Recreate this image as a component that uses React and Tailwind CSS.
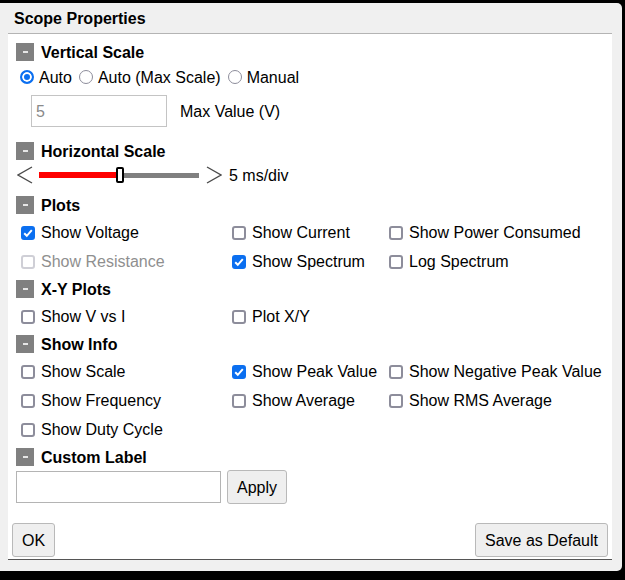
import React from 'react';

// ─── Collapsible section heading ───────────────────────────────────────────
const SectionHeading = ({ title }) => (
  <div className="flex items-center h-[26px] pl-[8px]">
    <span className="w-[18px] h-[18px] bg-[#808080] flex items-center justify-center">
      <span className="w-[5px] h-[2px] bg-[#e6e6e6]" />
    </span>
    <span className="ml-[7px] font-bold pt-[1px]">{title}</span>
  </div>
);

// ─── Checkbox cell ─────────────────────────────────────────────────────────
const Check = ({ label, checked, disabled }) => (
  <label className={`flex items-center ${disabled ? 'text-[#8f8f8f]' : 'text-black'}`}>
    <span className="relative ml-[4px] w-[14px] h-[14px] shrink-0">
      <input
        type="checkbox"
        defaultChecked={checked}
        disabled={disabled}
        className="appearance-none block m-0 w-[14px] h-[14px] border-2 border-[#8d8d9b] rounded-[3px] bg-white checked:bg-[#0b6ff0] checked:border-[#0b6ff0] disabled:border-[#cfcfd6]"
      />
      {checked && (
        <svg width="14" height="14" viewBox="0 0 14 14" className="absolute left-0 top-0 pointer-events-none">
          <polyline points="3.2,7.2 5.8,9.8 10.8,4.2" fill="none" stroke="white" strokeWidth="2" />
        </svg>
      )}
    </span>
    <span className="ml-[6px] whitespace-nowrap pt-[1px]">{label}</span>
  </label>
);

const CheckRow = ({ items }) => (
  <div className="grid grid-cols-[211px_157px_1fr] items-center h-[29px] pl-[9px]">
    {items.map((it, i) => (
      <div key={i}>{it && <Check {...it} />}</div>
    ))}
  </div>
);

const Radio = ({ label, checked, first }) => (
  <label className={`flex items-center ${first ? '' : 'ml-[7px]'}`}>
    <input
      type="radio"
      name="vscale"
      defaultChecked={checked}
      className="appearance-none block m-0 w-[14px] h-[14px] rounded-full border-[1.5px] border-[#8d8d9b] bg-white checked:border-2 checked:border-[#0b6ff0] checked:bg-[#0b6ff0] checked:shadow-[inset_0_0_0_2px_white]"
    />
    <span className="ml-[5px] whitespace-nowrap pt-[1px]">{label}</span>
  </label>
);

const Chevron = ({ dir }) => (
  <svg width="16" height="18" viewBox="0 0 16 18" className="shrink-0">
    <polyline
      points={dir === 'left' ? '15,1 1,9 15,17' : '1,1 15,9 1,17'}
      fill="none"
      stroke="#4a4a4a"
      strokeWidth="1.4"
    />
  </svg>
);

const btnClass =
  "h-[34px] px-[9px] bg-[#efefef] border border-[#b9b9b9] rounded-[3px] text-black text-[16px] pt-[1px]";

export default function App() {
  return (
    <div className="w-[625px] h-[580px] bg-black pt-[3px] overflow-hidden font-['Liberation_Sans',Arial,sans-serif] text-[16px] text-black">
      <div className="w-[622px] h-[568px] bg-[#f0f0f0] rounded-r-[5px] flex flex-col">
        {/* Title bar */}
        <div className="h-[30px] flex items-center pl-[14px] pt-[2px] font-bold">Scope Properties</div>

        {/* Body */}
        <div className="ml-[8px] w-[604px] h-[527px] bg-white border-t border-t-[#b4b4b4] border-b border-b-[#555555] flex flex-col pt-[5px]">
          <SectionHeading title="Vertical Scale" />
          <div className="flex items-center h-[24px] pl-[12px]">
            <Radio label="Auto" checked first />
            <Radio label="Auto (Max Scale)" />
            <Radio label="Manual" />
          </div>
          <div className="flex items-center mt-[6px] h-[32px] pl-[23px]">
            <input
              type="text"
              defaultValue="5"
              disabled
              className="w-[136px] h-[32px] border border-[#c4c4c4] px-[4px] pt-[1px] text-[#8a8a8a] bg-white outline-none"
            />
            <span className="ml-[13px] pt-[1px]">Max Value (V)</span>
          </div>

          <div className="mt-[11px]">
            <SectionHeading title="Horizontal Scale" />
          </div>
          <div className="flex items-center h-[22px] pl-[9px]">
            <Chevron dir="left" />
            <div className="relative ml-[6px] w-[160px] h-[16px] flex items-center">
              <div className="w-[77px] h-[6px] bg-[#ff0000]" />
              <div className="flex-1 h-[5px] bg-[#808080]" />
              <div className="absolute left-[77px] top-0 w-[8px] h-[16px] bg-white border-2 border-black rounded-[2px]" />
            </div>
            <div className="ml-[7px]">
              <Chevron dir="right" />
            </div>
            <span className="ml-[7px] pt-[1px]">5 ms/div</span>
          </div>

          <div className="mt-[6px]">
            <SectionHeading title="Plots" />
          </div>
          <CheckRow
            items={[
              { label: 'Show Voltage', checked: true },
              { label: 'Show Current' },
              { label: 'Show Power Consumed' },
            ]}
          />
          <CheckRow
            items={[
              { label: 'Show Resistance', disabled: true },
              { label: 'Show Spectrum', checked: true },
              { label: 'Log Spectrum' },
            ]}
          />

          <SectionHeading title="X-Y Plots" />
          <CheckRow items={[{ label: 'Show V vs I' }, { label: 'Plot X/Y' }, null]} />

          <SectionHeading title="Show Info" />
          <CheckRow
            items={[
              { label: 'Show Scale' },
              { label: 'Show Peak Value', checked: true },
              { label: 'Show Negative Peak Value' },
            ]}
          />
          <CheckRow
            items={[
              { label: 'Show Frequency' },
              { label: 'Show Average' },
              { label: 'Show RMS Average' },
            ]}
          />
          <CheckRow items={[{ label: 'Show Duty Cycle' }, null, null]} />

          <SectionHeading title="Custom Label" />
          <div className="flex items-center mt-[1px] h-[32px] pl-[8px]">
            <input type="text" className="w-[205px] h-[32px] border border-[#b4b4b4] px-[4px] outline-none" />
            <button className={`${btnClass} ml-[6px] h-[31px]`}>Apply</button>
          </div>

          {/* Footer buttons */}
          <div className="mt-auto mb-[2px] flex justify-between items-center px-[4px]">
            <button className={btnClass}>OK</button>
            <button className={btnClass}>Save as Default</button>
          </div>
        </div>
      </div>
    </div>
  );
}
